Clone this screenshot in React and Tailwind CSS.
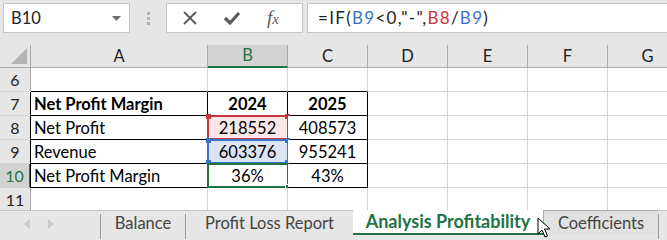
import React from 'react';

const font = { fontFamily: 'Lato, "Open Sans", sans-serif' };

const cols = ['A', 'B', 'C', 'D', 'E', 'F', 'G'];
const widths = ['w-[177px]', 'w-[80px]', 'w-[80px]', 'w-[80px]', 'w-[80px]', 'w-[80px]', 'w-[80px]'];

const rows = [
    { n: 6, cells: ['', '', ''] },
    { n: 7, cells: ['Net Profit Margin', '2024', '2025'], bold: true },
    { n: 8, cells: ['Net Profit', '218552', '408573'] },
    { n: 9, cells: ['Revenue', '603376', '955241'] },
    { n: 10, cells: ['Net Profit Margin', '36%', '43%'] },
    { n: 11, cells: ['', '', ''] },
];

function Corner({ className }) {
    return <span className={`absolute w-[5px] h-[5px] ${className}`} />;
}

function Selection({ kind }) {
    if (kind === 'red') {
        return (
            <div className="absolute -left-[1px] -top-[1px] w-[82px] h-[25px] border-2 border-[#c8373d] pointer-events-none">
                <Corner className="-left-[3px] -top-[3px] bg-[#c8373d]" />
                <Corner className="-right-[3px] -top-[3px] bg-[#c8373d]" />
            </div>
        );
    }
    if (kind === 'blue') {
        return (
            <div className="absolute -left-[1px] -top-[1px] w-[82px] h-[25px] border-2 border-[#3a74c9] pointer-events-none">
                <Corner className="-left-[3px] -top-[3px] bg-[#3a74c9]" />
                <Corner className="-right-[3px] -top-[3px] bg-[#3a74c9]" />
                <Corner className="-left-[3px] -bottom-[3px] bg-[#3a74c9]" />
                <Corner className="-right-[3px] -bottom-[3px] bg-[#3a74c9]" />
            </div>
        );
    }
    return (
        <div className="absolute -left-[1px] -top-[1px] w-[82px] h-[25px] border-2 border-[#217346] pointer-events-none">
            <Corner className="-right-[4px] -bottom-[4px] bg-[#217346] border border-white w-[6px] h-[6px]" />
        </div>
    );
}

function Row({ row }) {
    const inTable = row.n >= 7 && row.n <= 10;
    const active = row.n === 10;
    return (
        <div className="flex h-[24px]">
            <div
                className={`w-[31px] shrink-0 flex items-center justify-center text-[16px] border-b border-[#d4d4d4] ${
                    active
                        ? 'bg-[#d2d2d2] text-[#217346] border-r-2 border-r-[#217346]'
                        : 'bg-[#e6e6e6] text-[#222] border-r border-r-[#ababab]'
                }`}
            >
                {row.n}
            </div>
            {cols.map((c, i) => {
                const tableCol = i <= 2;
                const t = inTable && tableCol;
                const above = row.n === 6 && tableCol;
                const text = row.cells[i] || '';
                let bg = 'bg-white';
                let sel = null;
                if (c === 'B' && row.n === 8) { bg = 'bg-[#fbe7e7]'; sel = 'red'; }
                if (c === 'B' && row.n === 9) { bg = 'bg-[#dbe4f3]'; sel = 'blue'; }
                if (c === 'B' && row.n === 10) { sel = 'green'; }
                const rightBorder = t ? 'border-r-black' : 'border-r-[#d4d4d4]';
                const bottomBorder = t || above ? 'border-b-black' : 'border-b-[#d4d4d4]';
                return (
                    <div
                        key={c}
                        className={`relative ${widths[i]} shrink-0 border-r border-b ${rightBorder} ${bottomBorder} ${bg} flex items-center text-[16.5px] text-black ${
                            i === 0 ? 'justify-start pl-[3px]' : 'justify-center'
                        } ${row.bold ? 'font-bold' : ''}`}
                    >
                        {i === 0 && t && <span className="absolute -left-[1px] top-0 bottom-[-1px] w-[1px] bg-black" />}
                        <span className="leading-none pt-[1px]">{text}</span>
                        {sel && <Selection kind={sel} />}
                    </div>
                );
            })}
        </div>
    );
}

function Cursor() {
    return (
        <svg className="absolute left-[537px] top-[217px]" width="14" height="22" viewBox="0 0 14 22">
            <path d="M1 1 L1 17 L5 13 L8 20 L10.5 19 L7.5 12 L13 12 Z" fill="white" stroke="black" strokeWidth="1" strokeLinejoin="miter" />
        </svg>
    );
}

export default function App() {
    return (
        <div className="relative w-[667px] h-[240px] overflow-hidden bg-[#e6e6e6] select-none" style={font}>
            {/* formula bar */}
            <div className="flex h-[45px] pt-[3px] items-start">
                <div className="ml-[3px] w-[127px] h-[30px] bg-white border border-[#c6c6c6] flex items-center justify-between pl-[7px] pr-[8px]">
                    <span className="text-[16.5px] text-[#222]">B10</span>
                    <svg width="9" height="5" viewBox="0 0 9 5"><path d="M0 0 L9 0 L4.5 5 Z" fill="#6e6e6e" /></svg>
                </div>
                <div className="ml-[17px] mt-[9px] flex flex-col gap-[2px]">
                    <span className="w-[3px] h-[3px] bg-[#b2b2b2]" />
                    <span className="w-[3px] h-[3px] bg-[#b2b2b2]" />
                    <span className="w-[3px] h-[3px] bg-[#b2b2b2]" />
                </div>
                <div className="ml-[16px] w-[137px] h-[30px] bg-white border border-[#c6c6c6] flex items-center">
                    <svg className="ml-[15px]" width="16" height="16" viewBox="0 0 16 16">
                        <path d="M2 2 L14 14 M14 2 L2 14" stroke="#5a5a5a" strokeWidth="1.8" />
                    </svg>
                    <svg className="ml-[25px]" width="18" height="16" viewBox="0 0 18 16">
                        <path d="M2 8 L7 13 L16 3" stroke="#5a5a5a" strokeWidth="3.2" fill="none" />
                    </svg>
                    <span className="ml-[26px] text-[19px] italic text-[#5a5a5a]" style={{ fontFamily: '"Liberation Serif", serif' }}>
                        f<span className="text-[15px]">x</span>
                    </span>
                </div>
                <div className="ml-[4px] flex-1 h-[30px] bg-white border border-[#c6c6c6] border-r-0 flex items-center pl-[10px] text-[17px] tracking-[1.3px] text-[#222]">
                    =IF(<span className="text-[#3a74c9]">B9</span>&lt;0,"-",<span className="text-[#c8373d]">B8</span>/<span className="text-[#3a74c9]">B9</span>)
                </div>
            </div>

            {/* column headers */}
            <div className="flex h-[23px] bg-[#e6e6e6]">
                <div className="relative w-[31px] shrink-0 border-r border-[#ababab] border-b">
                    <svg className="absolute right-[3px] bottom-[3px]" width="16" height="16" viewBox="0 0 16 16">
                        <path d="M16 0 L16 16 L0 16 Z" fill="#b4b4b4" />
                    </svg>
                </div>
                {cols.map((c, i) => (
                    <div
                        key={c}
                        className={`${widths[i]} shrink-0 flex items-center justify-center text-[16.5px] border-r border-[#ababab] ${
                            c === 'B' ? 'bg-[#d2d2d2] text-[#217346] border-b-2 border-b-[#217346]' : 'text-[#222] border-b border-b-[#ababab]'
                        }`}
                    >
                        {c}
                    </div>
                ))}
            </div>

            {/* grid */}
            <div>
                {rows.map((r) => (
                    <Row key={r.n} row={r} />
                ))}
            </div>

            {/* sheet tabs */}
            <div className="absolute left-0 right-0 top-[210px] h-[30px] bg-[#e6e6e6] border-t border-[#c6c6c6] flex items-start text-[16.5px]">
                <div className="w-[100px] h-[25px] flex items-center gap-[18px] pl-[24px]">
                    <svg width="6" height="10" viewBox="0 0 6 10"><path d="M6 0 L0 5 L6 10 Z" fill="#c8c8c8" /></svg>
                    <svg width="6" height="10" viewBox="0 0 6 10"><path d="M0 0 L6 5 L0 10 Z" fill="#c8c8c8" /></svg>
                </div>
                <div className="h-[25px] border-l border-[#9a9a9a] mt-[3px]" />
                <div className="w-[84px] h-[25px] flex items-center justify-center text-[#444]">Balance</div>
                <div className="h-[25px] border-l border-[#9a9a9a] mt-[3px]" />
                <div className="w-[167px] h-[25px] flex items-center justify-center text-[#444]">Profit Loss Report</div>
                <div className="w-[190px] -mt-[1px] h-[25px] bg-white flex items-center justify-center text-[18px] font-bold text-[#217346] border-b-2 border-[#217346]">
                    Analysis Profitability
                </div>
                <div className="w-[115px] -mt-[1px] h-[25px] flex items-center justify-center text-[#444] bg-[#e1e1e1] border-l border-t border-[#ababab]">
                    Coefficients
                </div>
                <div className="h-[25px] border-l border-[#9a9a9a] mt-[3px]" />
            </div>
            <Cursor />
        </div>
    );
}
